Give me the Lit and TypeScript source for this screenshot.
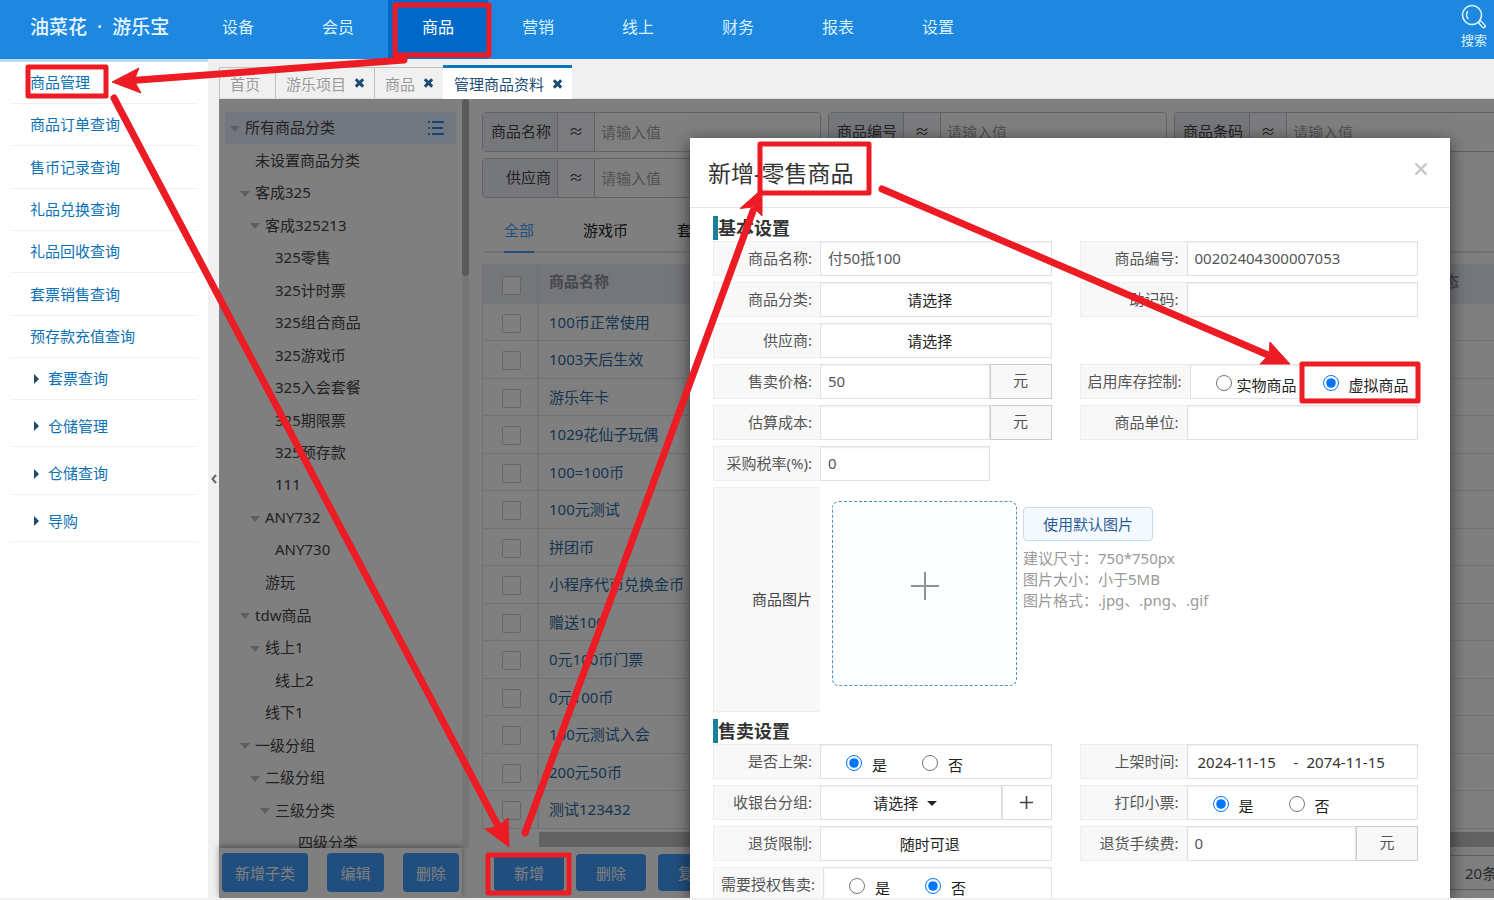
import { LitElement, html, css, svg, nothing } from "lit";
import { customElement } from "lit/decorators.js";

const base = css`
  :host, *, *::before, *::after { box-sizing: border-box; }
  button, input, select { font: inherit; color: inherit; margin: 0; border-radius: 0; }
  button { padding: 0; background: none; border: 0; white-space: nowrap; cursor: pointer; }
  a { color: inherit; text-decoration: none; }
  ul { list-style: none; margin: 0; padding: 0; }
  h2, h3, p { margin: 0; }
`;

@customElement("top-bar")
class TopBar extends LitElement {
  static styles = [base, css`
    :host { display: flex; height: 59px; background: #1e88e1; color: #fff; flex: none; }
    .logo { width: 188px; padding-left: 30px; display: flex; align-items: center; gap: 10px; font-size: 19px; font-weight: 500; line-height: 54px; height: 54px; color: #e4f6ff; }
    .nav { display: flex; flex: 1; }
    .item { display: block; width: 100px; height: 59px; line-height: 54px; text-align: center; font-size: 16px; color: #d9f1ff; }
    .on { background: #0069c8; color: #fff; }
    .search { width: 40px; display: flex; flex-direction: column; align-items: center; padding-top: 3px; gap: 2px; font-size: 13px; line-height: 18px; color: #d9f1ff; }
  `];
  render() {
    const items = ["设备", "会员", "商品", "营销", "线上", "财务", "报表", "设置"];
    return html`
      <div class="logo"><span>油菜花</span><span>·</span><span>游乐宝</span></div>
      <nav class="nav">${items.map((t) => html`<a href="#" class="item ${t === "商品" ? "on" : ""}">${t}</a>`)}</nav>
      <button class="search">
        <svg width="26" height="26" viewBox="0 0 26 26" fill="none" stroke="#d9f5ff" stroke-linecap="round">
          <circle cx="11" cy="12" r="9.5" stroke-width="1.6"/>
          <path d="M6.6 8.6a6 6 0 0 0 0.4 7" stroke-width="1.5"/>
          <path d="M18 19l1.6-1.4 4.2 4.4a1.5 1.5 0 0 1-2.2 2.2L17.6 20" stroke-width="1.4"/>
        </svg>
        搜索
      </button>`;
  }
}

@customElement("side-menu")
class SideMenu extends LitElement {
  static styles = [base, css`
    :host { display: block; width: 208px; flex: none; background: #fff; border-top: 3px solid #b9dcf8; padding: 0 10px; font-size: 15px; color: #0d71b5; }
    .list { display: grid; grid-auto-rows: 42px 42px 43px; }
    .groups { display: grid; grid-auto-rows: 47px 48px; }
    li { border-bottom: 1px solid #f0f0f0; display: flex; }
    a { flex: 1; display: flex; align-items: center; padding: 0 0 2px 20px; }
    .groups a { padding: 4px 0 0 20px; }
    .parent::before { content: ""; border: 5px solid transparent; border-left-color: #1f4a6b; border-right: 0; margin: 2px 9px 0 4px; }
  `];
  render() {
    const links = ["商品管理", "商品订单查询", "售币记录查询", "礼品兑换查询", "礼品回收查询", "套票销售查询", "预存款充值查询"];
    return html`
      <ul class="list">
        ${links.map((t) => html`<li><a href="#">${t}</a></li>`)}
        <li><a href="#" class="parent">套票查询</a></li>
      </ul>
      <ul class="groups">
        ${["仓储管理", "仓储查询", "导购"].map((t) => html`<li><a href="#" class="parent">${t}</a></li>`)}
      </ul>`;
  }
}

@customElement("page-tabs")
class PageTabs extends LitElement {
  static styles = [base, css`
    :host { display: flex; height: 40px; flex: none; padding-top: 6px; background: #f0f0f0; align-items: flex-end; font-size: 15px; color: #999; border-bottom: 1px solid #ddd; }
    .tab { height: 31px; display: flex; align-items: center; gap: 9px; padding: 0 10px; border: 1px solid #c0c0c0; border-bottom: 0; border-right: 0; }
    .plain { padding-right: 15px; }
    .active { height: 34px; background: #fff; border: 0; border-top: 3px solid #0b74ba; color: #1d4b73; margin-bottom: -1px; padding-left: 11px; }
    button { display: flex; }
  `];
  render() {
    const x = html`<button aria-label="关闭"><svg width="9" height="10" viewBox="0 0 9 10" stroke="#1d4b73" stroke-width="3"><path d="M.8 1.2l7.4 7.4M8.2 1.2L.8 8.6"/></svg></button>`;
    return html`
      <div class="tab plain"><a href="#">首页</a></div>
      <div class="tab"><a href="#">游乐项目</a>${x}</div>
      <div class="tab"><a href="#">商品</a>${x}</div>
      <div class="tab active"><a href="#">管理商品资料</a>${x}</div>`;
  }
}

type Node = [text: string, level: number, open: boolean];
const TREE: Node[] = [
  ["所有商品分类", 0, true], ["未设置商品分类", 1, false], ["客成325", 1, true], ["客成325213", 2, true],
  ["325零售", 3, false], ["325计时票", 3, false], ["325组合商品", 3, false], ["325游戏币", 3, false],
  ["325入会套餐", 3, false], ["325期限票", 3, false], ["325预存款", 3, false], ["111", 3, false],
  ["ANY732", 2, true], ["ANY730", 3, false], ["游玩", 2, false], ["tdw商品", 1, true],
  ["线上1", 2, true], ["线上2", 3, false], ["线下1", 2, false], ["一级分组", 1, true],
  ["二级分组", 2, true], ["三级分类", 3, true], ["四级分类", 5, false],
];

@customElement("category-tree")
class CategoryTree extends LitElement {
  static styles = [base, css`
    :host { display: flex; flex-direction: column; width: 250px; flex: none; font-size: 15px; color: #444; min-height: 0; }
    .scroll { flex: 1; min-height: 0; display: flex; overflow: hidden; }
    .tree { flex: 1; display: grid; grid-auto-rows: 32px 33px; padding: 13px 6px 0; align-content: start; }
    .node { display: flex; align-items: center; padding-bottom: 3px; }
    .node span { flex: 1; }
    .root { background: #e4effe; }
    .arrow { width: 20px; flex: none; display: flex; justify-content: center; padding-top: 4px; }
    .l1 { padding-left: 10px; } .l2 { padding-left: 20px; } .l3 { padding-left: 30px; } .l5 { padding-left: 53px; }
    .root button { display: flex; margin-right: 12px; padding-top: 2px; }
    .bar { width: 7px; background: #ededed; }
    .thumb { height: 177px; background: #b4b4b4; border-radius: 4px; }
    .foot { height: 50px; flex: none; display: flex; justify-content: space-between; padding: 5px 3px 0; width: 243px; box-shadow: 0 -2px 6px rgba(0,0,0,.35); }
    .foot button { height: 39px; padding: 0 13px; border-radius: 4px; background: #409eff; color: #fff; }
  `];
  render() {
    return html`
      <div class="scroll">
        <ul class="tree">
          ${TREE.map(([t, l, open]) => html`<li class="node l${l} ${l ? "" : "root"}">
            <i class="arrow">${open ? html`<svg width="10" height="6"><path d="M0 0h10L5 6z" fill="#b8bcc4"/></svg>` : nothing}</i>
            <span>${t}</span>
            ${l ? nothing : html`<button aria-label="列表"><svg width="16" height="14" viewBox="0 0 16 14" fill="#2f86f6"><path d="M0 0h2v2H0zM4 0h12v2H4zM0 6h2v2H0zM4 6h11v2H4zM0 12h2v2H0zM4 12h12v2H4z"/></svg></button>`}
          </li>`)}
        </ul>
        <div class="bar"><div class="thumb"></div></div>
      </div>
      <div class="foot"><button>新增子类</button><button>编辑</button><button>删除</button></div>`;
  }
}

@customElement("goods-list")
class GoodsList extends LitElement {
  static styles = [base, css`
    :host { display: flex; flex-direction: column; flex: 1; min-width: 0; padding: 13px 0 0 13px; font-size: 15px; overflow: hidden; }
    .filters { display: grid; grid-template-columns: repeat(3, minmax(339px, 1fr)); gap: 6px 7px; color: #444; }
    .filter { display: grid; grid-template-columns: 75px 37px 1fr; height: 40px; border: 1px solid #c0c4cc; border-radius: 4px; overflow: hidden; line-height: 36px; }
    .filter label { background: #eceff7; text-align: right; padding-right: 6px; border-right: 1px solid #c0c4cc; }
    .op { text-align: center; border-right: 1px solid #c0c4cc; background: #f8f9fc; }
    .filter input { border: 0; padding: 0 6px; min-width: 0; background: #fff; }
    .filter input::placeholder { color: #a0a4ac; }
    .kinds { display: flex; gap: 49px; margin: 13px 0 11px 2px; padding-left: 20px; height: 42px; line-height: 36px; border-bottom: 2px solid #dfe2e8; flex: none; color: #222; }
    .kinds button { height: 42px; padding-bottom: 2px; border-bottom: 2px solid transparent; }
    .kinds .on { color: #409eff; border-bottom-color: #409eff; }
    .wrap { flex: 1; min-height: 0; overflow: hidden; }
    table { width: 100%; border-collapse: separate; border-spacing: 0; table-layout: fixed; color: #2a6ba5; }
    th { height: 40px; background: #eaedf5; color: #8c909a; text-align: left; padding: 0 10px 6px; font-weight: bold; line-height: 20px; }
    td { height: 37px; padding: 0 10px 1px; border-bottom: 1px solid #e2e5ec; line-height: 20px; white-space: nowrap; }
    tr:nth-child(even) td { height: 38px; }
    .pick { width: 57px; padding: 2px 0 0 19px; border-left: 1px solid #e2e5ec; border-right: 2px solid #e4e6ea; }
    .state { width: 75px; }
    .pick input { appearance: none; display: block; width: 19px; height: 19px; border: 1px solid #c9cdd6; border-radius: 2px; background: #fff; }
    .hbar { margin-left: 57px; height: 15px; background: #c4c4c4; flex: none; }
    .foot { height: 51px; flex: none; display: flex; align-items: center; gap: 12px; padding-left: 12px; }
    .foot button { width: 70px; height: 37px; border-radius: 4px; background: #409eff; color: #fff; }
    .foot select { margin-left: auto; width: 60px; height: 35px; appearance: none; border: 1px solid #b8bcc4; border-right: 0; background: #fff; padding-left: 30px; color: #555; }
  `];
  render() {
    const rows = ["100币正常使用", "1003天后生效", "游乐年卡", "1029花仙子玩偶", "100=100币", "100元测试", "拼团币",
      "小程序代币兑换金币", "赠送100", "0元100币门票", "0元100币", "100元测试入会", "200元50币", "测试123432"];
    return html`
      <form class="filters">
        ${["商品名称", "商品编号", "商品条码", "供应商"].map((t, i) => html`<div class="filter">
          <label for="f${i}">${t}</label><span class="op">≈</span><input id="f${i}" placeholder="请输入值">
        </div>`)}
      </form>
      <div class="kinds"><button class="on">全部</button><button>游戏币</button><button>套票</button></div>
      <div class="wrap">
        <table>
          <thead><tr><th class="pick"><input type="checkbox" aria-label="全选"></th><th>商品名称</th><th class="state">状态</th></tr></thead>
          <tbody>${rows.map((t) => html`<tr><td class="pick"><input type="checkbox" aria-label=${t}></td><td><a href="#">${t}</a></td><td></td></tr>`)}</tbody>
        </table>
      </div>
      <div class="hbar"></div>
      <div class="foot"><button>新增</button><button>删除</button><button>复制</button>
        <select aria-label="每页条数"><option>20条/页</option></select></div>`;
  }
}

@customElement("goods-dialog")
class GoodsDialog extends LitElement {
  static styles = [base, css`
    :host { display: block; width: 760px; background: #fff; box-shadow: 0 4px 16px rgba(0,0,0,.6); font-size: 15px; color: #555; overflow: hidden; }
    .head { height: 70px; display: flex; justify-content: space-between; align-items: center; padding: 0 23px 0 18px; border-bottom: 1px solid #e5e5e5; }
    .head h2 { font-size: 23px; font-weight: 400; color: #333; line-height: 30px; }
    .head button { display: flex; padding-bottom: 8px; }
    .form { padding: 8px 32px 0 23px; }
    h3 { border-left: 5px solid #17819c; height: 24px; line-height: 24px; font-size: 18px; font-weight: bold; color: #333; margin-bottom: 1px; }
    .grid { display: grid; grid-template-columns: minmax(0, 1fr) minmax(0, 1fr); gap: 6px 28px; margin-bottom: 7px; }
    .field { display: flex; height: 35px; }
    .name { min-width: 107px; flex: none; background: #f8f8f8; border: 1px solid #eee; border-right: 0; text-align: right; padding: 0 8px 0 7px; line-height: 33px; white-space: nowrap; }
    .box { flex: 1; min-width: 0; border: 1px solid #e2e2e2; background: #fff; box-shadow: inset 0 1px 2px #eee; }
    input.box { padding: 0 7px 2px; }
    .unit { width: 62px; flex: none; border: 1px solid #ccc; background: #f8f8f8; text-align: center; line-height: 31px; }
    .short { padding-right: 62px; }
    button.box { color: #222; padding-right: 12px; text-align: center; }
    .choices { display: flex; align-items: center; padding-left: 25px; color: #222; }
    .choices label { display: flex; align-items: center; gap: 10px; width: 76px; flex: none; padding-top: 5px; white-space: nowrap; }
    .choices.wide label { gap: 5px; width: 107px; }
    .choices.wide label + label { gap: 10px; width: 90px; }
    input[type="radio"] { width: 16px; height: 16px; accent-color: #0075ff; margin: 0 0 3px; flex: none; }
    .pickone { position: relative; flex: 1; display: flex; min-width: 0; }
    .pickone select { appearance: none; text-align-last: center; padding: 0 30px 0 0; color: #222; }
    .caret { position: absolute; right: 65px; top: 16px; pointer-events: none; }
    .add { width: 50px; flex: none; border: 1px solid #ddd; display: flex; align-items: center; justify-content: center; }
    .dates { display: flex; align-items: center; padding-left: 10px; color: #333; }
    .dates input { border: 0; padding: 0; width: 96px; background: none; }
    .dates span { width: 13px; }
    .picture { grid-column: 1 / -1; height: 225px; display: flex; }
    .picture .name { line-height: 223px; color: #444; }
    .upload { margin: 14px 6px 0 12px; width: 185px; height: 185px; border: 1px dashed #4a90c8; border-radius: 7px; background: #fbfdff; display: flex; align-items: center; justify-content: center; padding-bottom: 15px; flex: none; }
    .tips { padding-top: 20px; color: #999; line-height: 21px; }
    .tips button { display: block; width: 130px; height: 34px; border: 1px solid #c6daf0; border-radius: 4px; background: #f4f9ff; color: #2b5f93; margin-bottom: 7px; }
  `];
  text(name: string, id: string, value = "") {
    return html`<div class="field"><label class="name" for=${id}>${name}</label><input class="box" id=${id} .value=${value}></div>`;
  }
  money(name: string, id: string, value = "") {
    return html`<div class="field"><label class="name" for=${id}>${name}</label><input class="box" id=${id} .value=${value}><span class="unit">元</span></div>`;
  }
  choose(name: string, value: string) {
    return html`<div class="field"><span class="name">${name}</span><button class="box" aria-label=${name}>${value}</button></div>`;
  }
  radios(name: string, id: string, options: string[], on: number, wide = false) {
    return html`<div class="field" role="radiogroup" aria-label=${name}><span class="name">${name}</span>
      <div class="box choices ${wide ? "wide" : ""}">${options.map((o, i) => html`<label><input type="radio" name=${id} ?checked=${i === on}>${o}</label>`)}</div></div>`;
  }
  render() {
    return html`
      <div class="head"><h2>新增-零售商品</h2>
        <button aria-label="关闭"><svg width="12" height="12" viewBox="0 0 12 12" stroke="#c8c8c8" stroke-width="2.4"><path d="M.5.5l11 11M11.5.5l-11 11"/></svg></button></div>
      <div class="form">
        <h3>基本设置</h3>
        <div class="grid">
          ${this.text("商品名称:", "name", "付50抵100")}
          ${this.text("商品编号:", "code", "00202404300007053")}
          ${this.choose("商品分类:", "请选择")}
          ${this.text("助记码:", "memo")}
          ${this.choose("供应商:", "请选择")}
          <span></span>
          ${this.money("售卖价格:", "price", "50")}
          ${this.radios("启用库存控制:", "stock", ["实物商品", "虚拟商品"], 1, true)}
          ${this.money("估算成本:", "cost")}
          ${this.text("商品单位:", "unit")}
          <div class="short">${this.text("采购税率(%):", "tax", "0")}</div>
          <span></span>
          <div class="picture"><span class="name">商品图片</span>
            <button class="upload" aria-label="上传图片"><svg width="30" height="30" stroke="#8c939d" stroke-width="2"><path d="M15 1v28M1 15h28"/></svg></button>
            <div class="tips"><button>使用默认图片</button><p>建议尺寸：750*750px</p><p>图片大小：小于5MB</p><p>图片格式：.jpg、.png、.gif</p></div>
          </div>
        </div>
        <h3>售卖设置</h3>
        <div class="grid">
          ${this.radios("是否上架:", "shelf", ["是", "否"], 0)}
          <div class="field"><label class="name" for="from">上架时间:</label>
            <div class="box dates"><input id="from" value="2024-11-15"><span>-</span><input aria-label="结束时间" value="2074-11-15"></div></div>
          <div class="field"><label class="name" for="group">收银台分组:</label>
            <div class="pickone"><select class="box" id="group"><option>请选择</option></select>
              <svg class="caret" width="10" height="5"><path d="M0 0h10L5 5z" fill="#222"/></svg></div>
            <button class="add" aria-label="添加分组"><svg width="13" height="13" stroke="#444" stroke-width="1.6"><path d="M6.5 0v13M0 6.5h13"/></svg></button></div>
          ${this.radios("打印小票:", "ticket", ["是", "否"], 0)}
          ${this.choose("退货限制:", "随时可退")}
          ${this.money("退货手续费:", "fee", "0")}
          ${this.radios("需要授权售卖:", "auth", ["是", "否"], 1)}
        </div>
      </div>`;
  }
}

@customElement("guide-marks")
class GuideMarks extends LitElement {
  static styles = css`
    :host { position: absolute; top: 0; left: 0; pointer-events: none; }
    svg { display: block; }
  `;
  render() {
    const boxes = [[395, 5, 94, 50], [28, 67, 78, 29], [760, 144, 109, 49], [1302, 364, 116, 37], [488, 855, 81, 38]];
    const lines = ["M404 60L132 80.5", "M114 98L497 824", "M525 833L753 211", "M882 189L1268 355"];
    const heads = ["M112 82L139 68L134 80.500L141 93Z", "M509 847L485 829L497 827L508 818Z", "M762 189L740 208.500L753 207L762 216Z", "M1290 364L1270 342L1269 355L1260 364Z"];
    return html`<svg width="1494" height="900" fill="none" stroke="#ed1c24" aria-hidden="true">
      ${boxes.map(([x, y, w, h]) => svg`<rect x=${x} y=${y} width=${w} height=${h} stroke-width="5" stroke-linejoin="round"/>`)}
      ${lines.map((d) => svg`<path d=${d} stroke-width="7" stroke-linecap="round"/>`)}
      ${heads.map((d) => svg`<path d=${d} fill="#ed1c24" stroke-width="1"/>`)}
    </svg>`;
  }
}

@customElement("app-root")
class AppRoot extends LitElement {
  static styles = css`
    :host { display: flex; flex-direction: column; position: relative; height: 100vh; overflow: hidden; background: #fff; border-bottom: 2px solid #f0f0f0; box-sizing: border-box;
      font-family: "Noto Sans", "Noto Sans CJK SC", sans-serif; font-size: 15px; }
    .body { flex: 1; min-height: 0; display: flex; }
    .fold { width: 11px; flex: none; padding: 0; border: 0; background: #f0f0f0; display: flex; align-items: center; justify-content: center; }
    .main { flex: 1; min-width: 0; display: flex; flex-direction: column; }
    .work { flex: 1; min-height: 0; display: flex; position: relative; }
    .mask { position: absolute; inset: 0; background: rgba(0,0,0,.5); display: flex; justify-content: flex-end; padding: 39px 44px 0 0; overflow: hidden; box-sizing: border-box; }
  `;
  render() {
    return html`
      <top-bar></top-bar>
      <div class="body">
        <side-menu></side-menu>
        <button class="fold" aria-label="收起菜单"><svg width="6" height="10" fill="none" stroke="#666" stroke-width="2"><path d="M5 1L1.500 5L5 9"/></svg></button>
        <div class="main">
          <page-tabs></page-tabs>
          <div class="work">
            <category-tree></category-tree>
            <goods-list></goods-list>
            <div class="mask"><goods-dialog></goods-dialog></div>
          </div>
        </div>
      </div>
      <guide-marks></guide-marks>`;
  }
}
